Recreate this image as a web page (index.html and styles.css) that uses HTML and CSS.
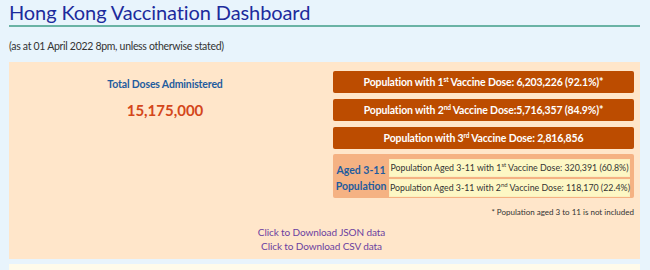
FILE: index.html
```html
<!DOCTYPE html>
<html lang="en">
<head>
    <meta charset="UTF-8">
    <title>Hong Kong Vaccination Dashboard</title>
    <link rel="stylesheet" href="styles.css">
</head>
<body>

<h1>Hong Kong Vaccination Dashboard</h1>
<p class="asat">(as at 01 April 2022 8pm, unless otherwise stated)</p>

<div class="panel">
    <div class="cols">
        <div class="total">
            <div class="total-label">Total Doses Administered</div>
            <div class="total-value">15,175,000</div>
        </div>
        <div class="doses">
            <div class="dose">Population with 1<sup>st</sup> Vaccine Dose: 6,203,226 (92.1%)*</div>
            <div class="dose">Population with 2<sup>nd</sup> Vaccine Dose:5,716,357 (84.9%)*</div>
            <div class="dose">Population with 3<sup>rd</sup> Vaccine Dose: 2,816,856</div>
            <div class="aged">
                <div class="aged-label">Aged 3-11<br>Population</div>
                <div class="aged-rows">
                    <div class="aged-row">Population Aged 3-11 with 1<sup>st</sup> Vaccine Dose: 320,391 (60.8%)</div>
                    <div class="aged-row">Population Aged 3-11 with 2<sup>nd</sup> Vaccine Dose: 118,170 (22.4%)</div>
                </div>
            </div>
            <div class="note">* Population aged 3 to 11 is not included</div>
        </div>
    </div>
    <div class="downloads">
        <a href="#">Click to Download JSON data</a><br>
        <a href="#">Click to Download CSV data</a>
    </div>
</div>

<div class="next-panel"></div>

</body>
</html>
```

FILE: styles.css
```css
body {
    margin: 0;
    padding: 0 10px 0 9px;
    background-color: #e8f4fc;
    font-family: Lato, "Noto Sans", sans-serif;
    color: #333;
}
h1 {
    margin: 0;
    font-size: 20px;
    font-weight: normal;
    line-height: 24px;
    letter-spacing: -0.1px;
    color: #1c2b9c;
    padding-bottom: 1px;
    border-bottom: 2px solid #6ab3a5;
}
.asat {
    margin: 12px 0 0 0;
    font-size: 10.5px;
    letter-spacing: -0.3px;
    line-height: 14px;
}
.panel {
    margin-top: 9px;
    background-color: #ffe6ca;
    padding: 9px 6px 6px 0;
}
.cols {
    display: grid;
    grid-template-columns: 312px minmax(0, 1fr);
    gap: 12px;
}
.total {
    text-align: center;
    padding-top: 6px;
}
.total-label {
    font-size: 10.5px;
    line-height: 14px;
    letter-spacing: -0.15px;
    font-weight: bold;
    color: #1f5c9e;
}
.total-value {
    margin-top: 9px;
    font-size: 15px;
    line-height: 20px;
    font-weight: bold;
    color: #d4461a;
}
.dose {
    background-color: #bc4c00;
    color: #fff;
    font-size: 10.5px;
    letter-spacing: -0.15px;
    font-weight: bold;
    text-align: center;
    height: 22px;
    line-height: 22px;
    border-radius: 2px;
    margin-bottom: 6px;
}
sup {
    font-size: 6.5px;
    line-height: 0;
    vertical-align: 4px;
}
.aged {
    display: flex;
    align-items: center;
    background-color: #f5b283;
    border-radius: 2px;
    padding: 5px 4px 1px 0;
    margin-top: -1px;
}
.aged-label {
    width: 56px;
    flex-shrink: 0;
    text-align: center;
    font-size: 10.5px;
    font-weight: bold;
    color: #1f5c9e;
    line-height: 16px;
    white-space: nowrap;
}
.aged-rows {
    flex: 1;
    min-width: 0;
    display: flex;
    flex-direction: column;
    gap: 2px;
}
.aged-row {
    background-color: #fdf7c4;
    border: 1px solid #fbefc0;
    font-size: 8.8px;
    line-height: 16px;
    text-align: center;
    white-space: nowrap;
    color: #333;
}
.aged-row sup {
    font-size: 6px;
}
.note {
    text-align: right;
    font-size: 8px;
    line-height: 12px;
    margin-top: 8px;
    color: #333;
}
.downloads {
    text-align: center;
    font-size: 10px;
    letter-spacing: -0.1px;
    line-height: 14px;
    margin-top: 7px;
}
.downloads a {
    color: #6b3fa0;
    text-decoration: none;
}
.next-panel {
    margin-top: 5px;
    height: 20px;
    background-color: #fffbea;
}
```
